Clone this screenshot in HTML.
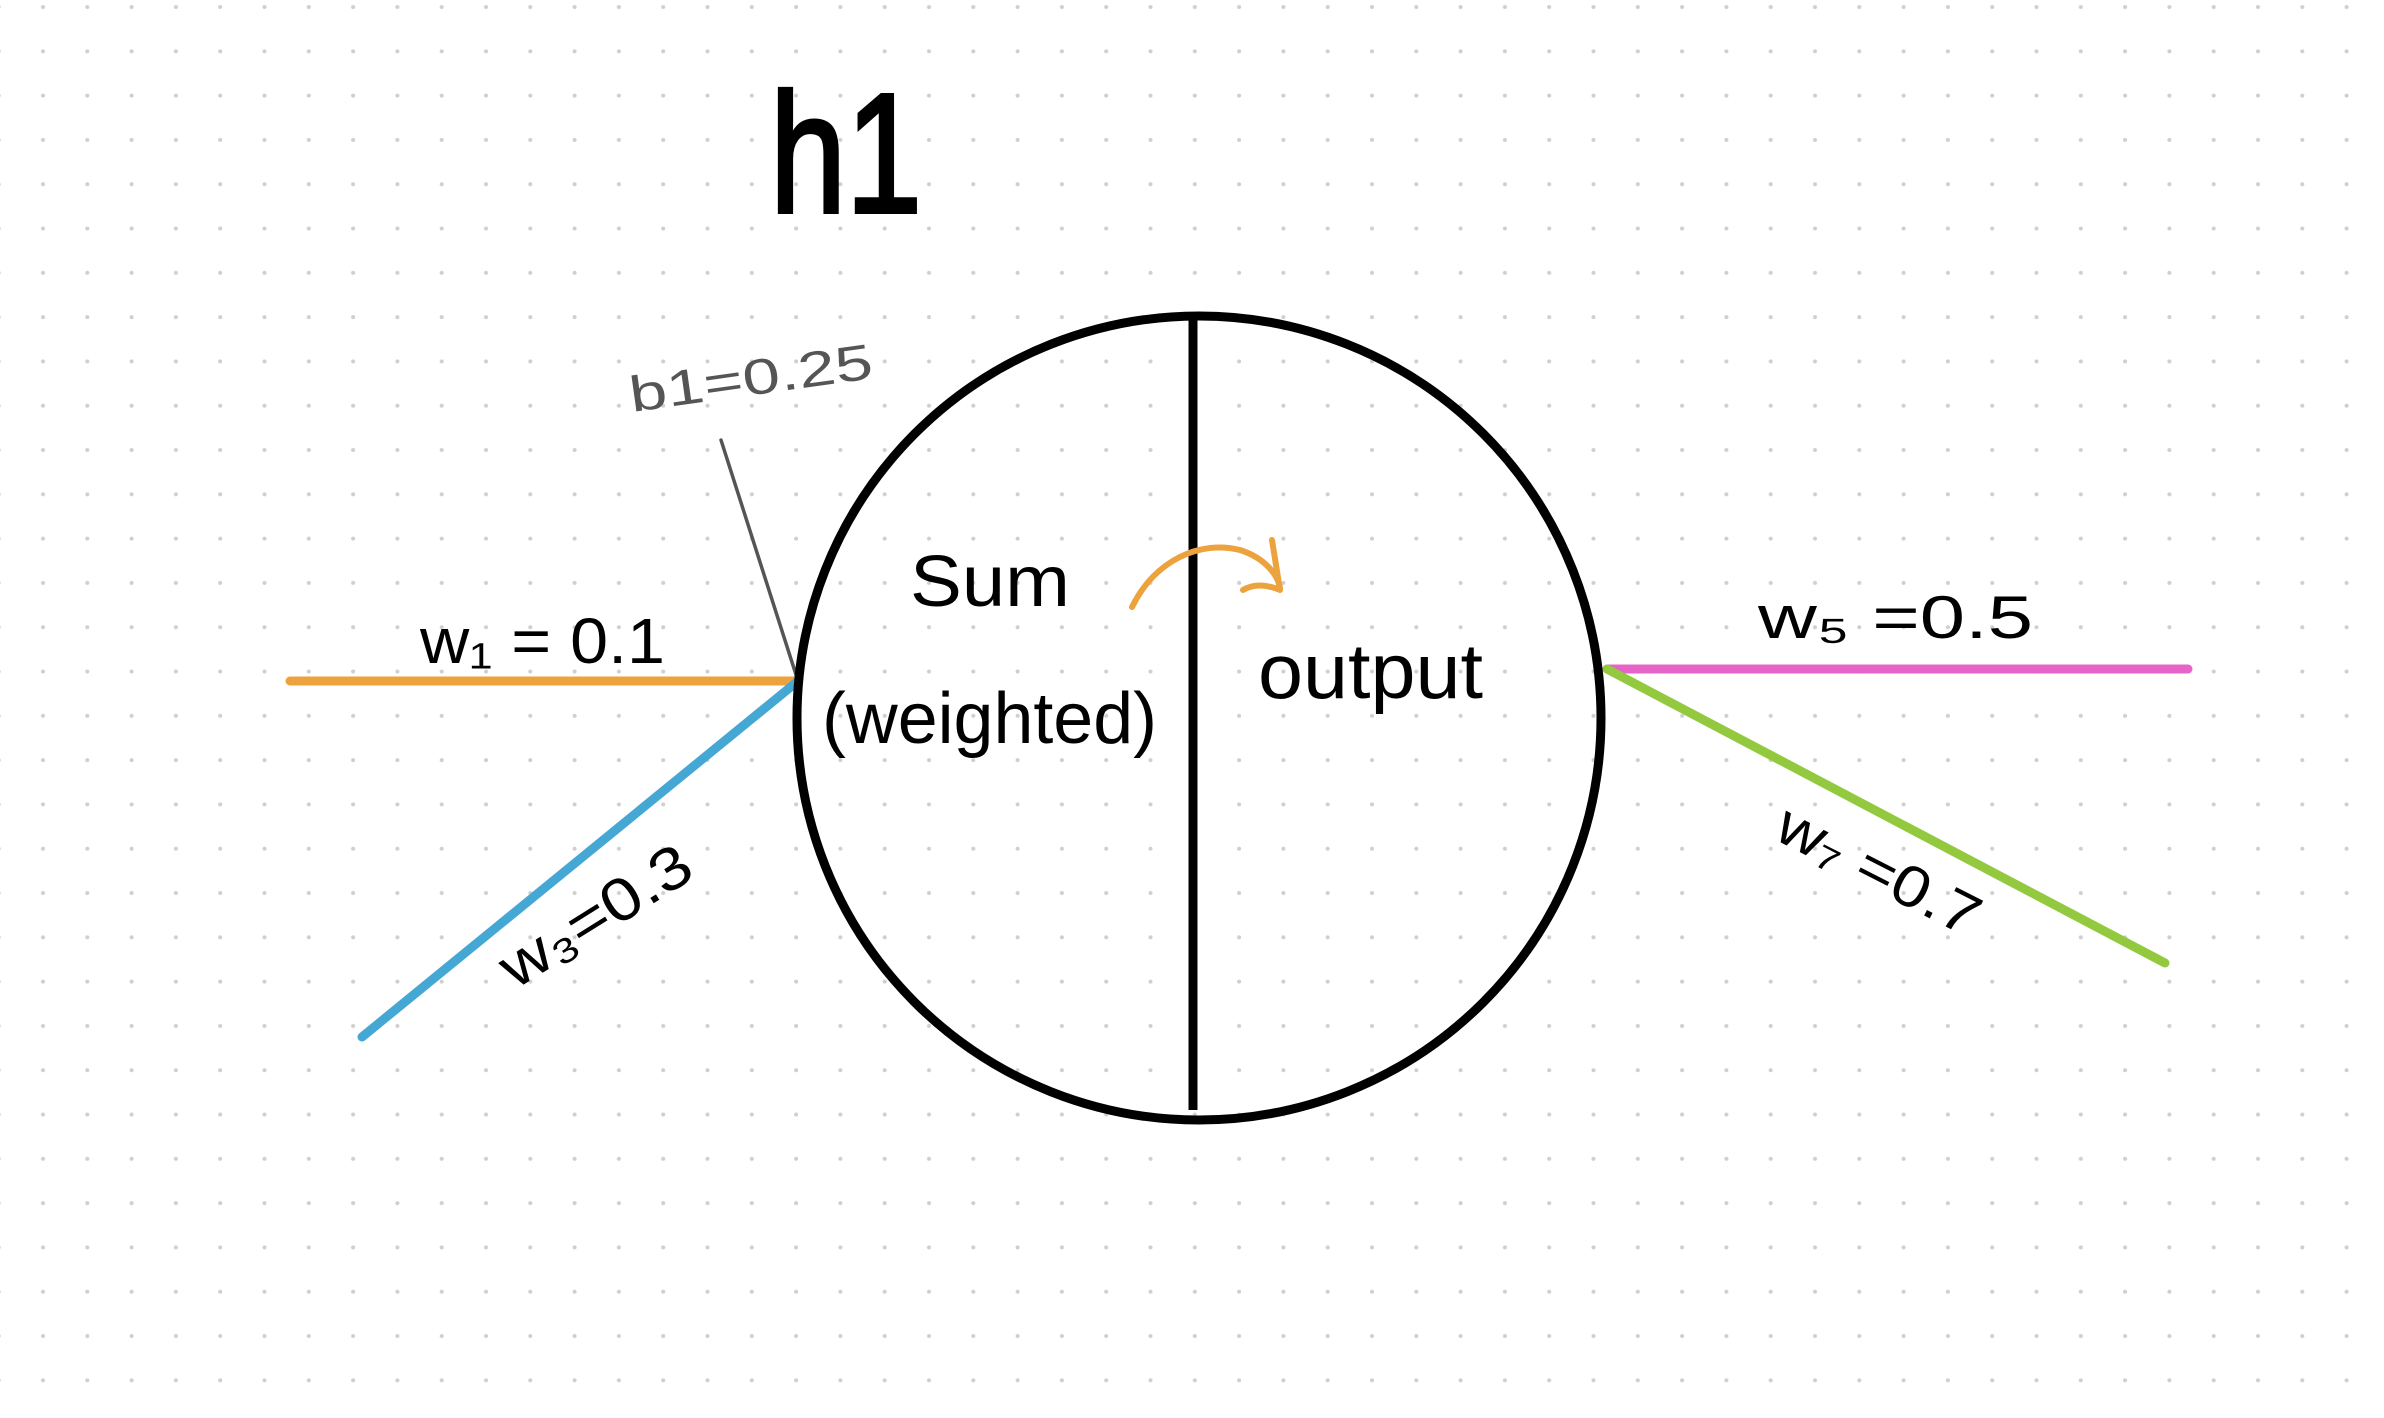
<!DOCTYPE html>
<html><head><meta charset="utf-8"><style>
html,body{margin:0;padding:0;background:#fff;}
svg{display:block}
text{font-family:"Liberation Sans",sans-serif;}
</style></head><body>
<svg width="2384" height="1418" viewBox="0 0 2384 1418" xmlns="http://www.w3.org/2000/svg">
<defs>
<pattern id="dots" x="21" y="-15" width="44.3" height="44.3" patternUnits="userSpaceOnUse">
<circle cx="22" cy="22" r="2" fill="#cfcfcf"/>
</pattern>
</defs>
<rect width="2384" height="1418" fill="#fff"/>
<rect width="2384" height="1418" fill="url(#dots)"/>

<line x1="290" y1="681" x2="798" y2="681" stroke="#eda33d" stroke-width="9" stroke-linecap="round"/>
<line x1="362" y1="1037" x2="798" y2="681" stroke="#45a7d3" stroke-width="9" stroke-linecap="round"/>
<line x1="721" y1="440" x2="798" y2="681" stroke="#555" stroke-width="3.5" stroke-linecap="round"/>
<line x1="1607" y1="669" x2="2188" y2="669" stroke="#e664c8" stroke-width="9" stroke-linecap="round"/>
<line x1="1607" y1="669" x2="2165" y2="963" stroke="#93c93f" stroke-width="9" stroke-linecap="round"/>

<circle cx="1199" cy="718" r="402" fill="none" stroke="#000" stroke-width="9"/>
<line x1="1193" y1="316" x2="1193" y2="1110" stroke="#000" stroke-width="9"/>

<path d="M1132,607 C1155,560 1200,540 1240,550 C1265,558 1278,575 1280,588" fill="none" stroke="#eda33d" stroke-width="6" stroke-linecap="round"/>
<path d="M1272,540 L1280,590 M1243,590 C1255,583 1268,585 1280,590" fill="none" stroke="#eda33d" stroke-width="6" stroke-linecap="round"/>

<text x="770" y="212" font-size="170" textLength="152" lengthAdjust="spacingAndGlyphs" stroke="#000" stroke-width="4">h1</text>
<text x="910" y="606" font-size="72" textLength="160" lengthAdjust="spacingAndGlyphs">Sum</text>
<text x="822" y="743" font-size="72" textLength="335" lengthAdjust="spacingAndGlyphs">(weighted)</text>
<text x="1258" y="698" font-size="78" textLength="225" lengthAdjust="spacingAndGlyphs">output</text>
<text x="420" y="663" font-size="64" textLength="245" lengthAdjust="spacingAndGlyphs">w₁ = 0.1</text>
<text x="632" y="412" font-size="50" fill="#555" transform="rotate(-8 632 412)" textLength="245" lengthAdjust="spacingAndGlyphs">b1=0.25</text>
<text x="1758" y="638" font-size="60" textLength="275" lengthAdjust="spacingAndGlyphs">w₅ =0.5</text>
<text x="515" y="990" font-size="60" transform="rotate(-32 515 990)" textLength="215" lengthAdjust="spacingAndGlyphs">w₃=0.3</text>
<text x="1772" y="838" font-size="58" transform="rotate(27 1772 838)" textLength="220" lengthAdjust="spacingAndGlyphs">w₇ =0.7</text>
</svg>
</body></html>
